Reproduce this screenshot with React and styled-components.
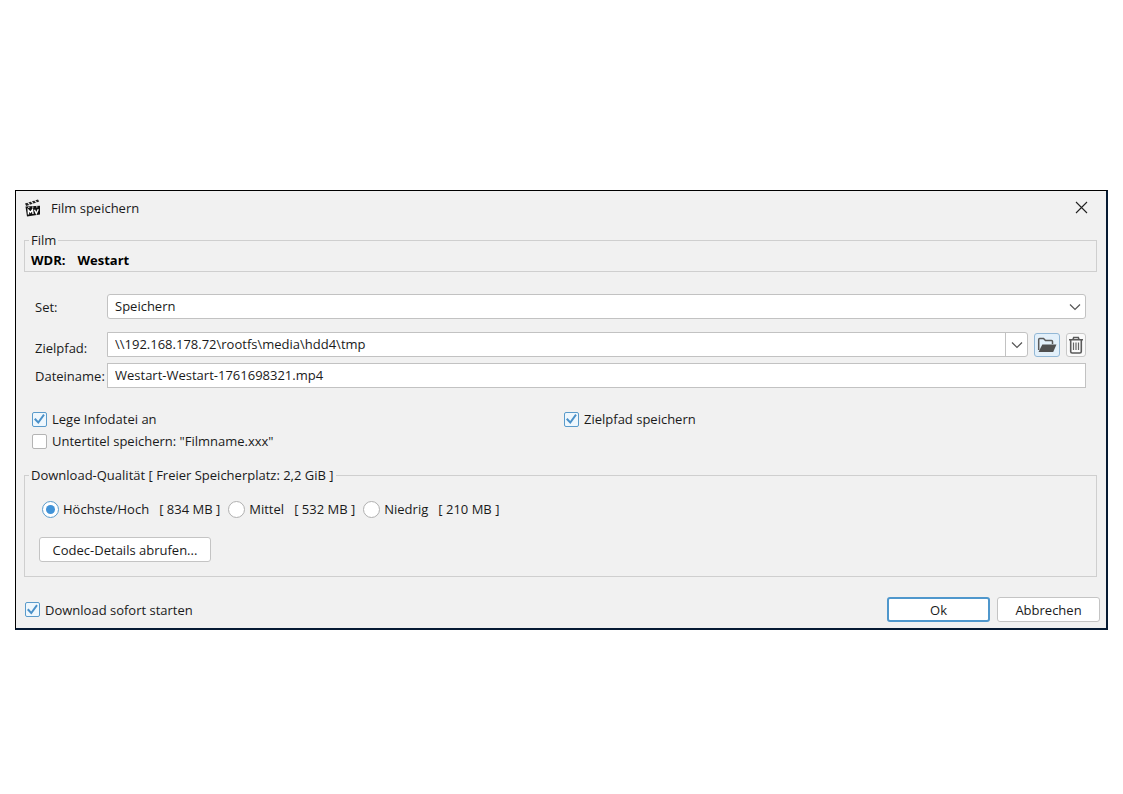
import React, { useState } from 'react'
import styled, { createGlobalStyle, css } from 'styled-components'

const GlobalStyle = createGlobalStyle`
    * {
        box-sizing: border-box;
    }
    body {
        margin: 0;
        background-color: #ffffff;
        color: #1a1a1a;
        font-family: "Open Sans", "Noto Sans", sans-serif;
        font-size: 13px;
        line-height: 18px;
    }
    button, input, select {
        font: inherit;
        color: inherit;
    }
`

const Page = styled.main`
    padding: 190px 15px 0;
`

const Dialog = styled.form`
    background-color: #f1f1f1;
    border: 1px solid #000000;
    border-right: 2px solid #061a33;
    border-bottom: 2px solid #061a33;
`

const TitleBar = styled.header`
    display: flex;
    align-items: center;
    height: 33px;
    margin-bottom: 7px;
    padding: 0 18px 0 9px;
`

const Title = styled.h1`
    flex: 1;
    margin: 0 0 0 10px;
    font-size: 13px;
    font-weight: 400;
`

const CloseButton = styled.button`
    display: flex;
    padding: 0;
    border: 0;
    background: none;
`

const Group = styled.fieldset`
    min-width: 0;
    margin: 0 9px 0 8px;
    padding: ${({ $roomy }) => ($roomy ? '16px 14px 14px' : '2px 6px 2px')};
    border: 1px solid #cfcfcf;

    legend {
        padding: 0 2px;
        margin-left: ${({ $roomy }) => ($roomy ? '-10px' : '-2px')};
    }
`

const FilmName = styled.p`
    display: flex;
    gap: 12px;
    margin: 0;
    color: #000000;
    font-weight: 700;
`

const Fields = styled.div`
    margin: 22px 20px 0 19px;
`

const FieldRow = styled.div`
    display: grid;
    grid-template-columns: 72px 1fr;
    align-items: center;
    margin-bottom: ${({ $gap = 0 }) => $gap}px;
`

const FieldLabel = styled.label`
    align-self: ${({ $low }) => ($low ? 'end' : 'center')};
`

const fieldBox = css`
    width: 100%;
    height: 25px;
    border: 1px solid #c2c2c2;
    background-color: #ffffff;
`

const SelectBox = styled.div`
    display: grid;
    align-items: center;

    > * {
        grid-area: 1 / 1;
    }
    svg {
        justify-self: end;
        margin-right: 5px;
        pointer-events: none;
    }
`

const Select = styled.select`
    ${fieldBox}
    appearance: none;
    padding: 0 24px 1px 7px;
    border-radius: 3px;
`

const TextInput = styled.input`
    ${fieldBox}
    padding: 0 7px 2px;
`

const PathRow = styled.div`
    display: flex;
    align-items: center;
    gap: 6px;
`

const ComboBox = styled.div`
    ${fieldBox}
    display: flex;
    flex: 1;
    border-radius: 0 3px 3px 0;

    input {
        flex: 1;
        min-width: 0;
        padding: 0 7px 2px;
        border: 0;
        background: none;
    }
    button {
        display: flex;
        align-items: center;
        justify-content: center;
        width: 22px;
        padding: 0;
        border: 0;
        border-left: 1px solid #c2c2c2;
        background: none;
    }
`

const IconButton = styled.button`
    display: flex;
    align-items: center;
    justify-content: center;
    width: ${({ $active }) => ($active ? '26px' : '20px')};
    height: 24px;
    padding: 0;
    border: 1px solid ${({ $active }) => ($active ? '#93b8d6' : '#c8c8c8')};
    border-radius: 3px;
    background-color: ${({ $active }) => ($active ? '#e3f0fa' : '#fafafa')};
`

const Options = styled.div`
    display: grid;
    grid-template-columns: 1fr 1fr;
    row-gap: 4px;
    margin: 22px 10px 16px 16px;
`

const Choice = styled.label`
    display: flex;
    align-items: center;
    gap: ${({ $gap = 5 }) => $gap}px;
    white-space: pre;
`

const Tick = styled.input`
    appearance: none;
    display: grid;
    place-items: center;
    width: 15px;
    height: 15px;
    margin: 0;
    border: 1px solid #b4b4b4;
    border-radius: 2px;
    background-color: #ffffff;

    &:checked {
        border-color: #5a9bcb;
        background-color: #eef7fd;
    }
    &:checked::before {
        content: '';
        width: 11px;
        height: 11px;
        background-color: #4a90c8;
        clip-path: polygon(0 55%, 14% 42%, 38% 68%, 84% 4%, 98% 16%, 40% 96%);
    }
`

const Radio = styled.input`
    appearance: none;
    display: grid;
    place-items: center;
    width: 17px;
    height: 17px;
    margin: 0;
    border: 1px solid #b0b0b0;
    border-radius: 50%;
    background-color: #ffffff;

    &:checked {
        border-color: #5a9bcb;
    }
    &:checked::before {
        content: '';
        width: 9px;
        height: 9px;
        border-radius: 50%;
        background-color: #4193d8;
    }
`

const Qualities = styled.div`
    display: flex;
    gap: 8px;
    margin: 0 3px 19px;
`

const Button = styled.button`
    display: block;
    width: ${({ $wide }) => ($wide ? '172px' : '103px')};
    height: 25px;
    padding: 0;
    border: ${({ $primary }) => ($primary ? '2px solid #4f97cc' : '1px solid #c4c4c4')};
    border-radius: 3px;
    background-color: #ffffff;
    text-align: center;
`

const Footer = styled.footer`
    display: flex;
    align-items: center;
    gap: 7px;
    padding: 20px 6px 6px 9px;

    label {
        margin-right: auto;
    }
`

const MvLogo = () => (
    <svg width="16" height="18" viewBox="0 0 16 18" aria-hidden="true">
        <path d="M0.500 7.500L15 6.800V15.500L2 17.500z" fill="#111" />
        <path d="M0 4.500L13 0.500l1.200 2L1.200 7z" fill="#222" />
        <path d="M2.500 3.200l2.200 2.500M6 2.200l2.200 2.500M9.500 1.200l2.200 2.500" stroke="#f1f1f1" strokeWidth="1.100" />
        <path d="M3 8.300l1.500 0M7 8.100h1.500M11 7.900h1.500" stroke="#f1f1f1" strokeWidth="1" />
        <path d="M3.500 15.500l-.300-4.500 2.300 2.500 2-2.800.500 4.300M9.500 10.700l1.800 3.800 2-4.300" fill="none" stroke="#fff" strokeWidth="1.400" />
    </svg>
)

const CloseIcon = () => (
    <svg width="13" height="13" viewBox="0 0 13 13" aria-hidden="true">
        <path d="M1 1l11 11M12 1L1 12" stroke="#222" strokeWidth="1.100" />
    </svg>
)

const Chevron = () => (
    <svg width="12" height="8" viewBox="0 0 12 8" aria-hidden="true">
        <path d="M1 1.500l5 5 5-5" fill="none" stroke="#555" strokeWidth="1.200" />
    </svg>
)

const FolderIcon = () => (
    <svg width="20" height="16" viewBox="0 0 20 16" aria-hidden="true">
        <path d="M1.700 13V2.500q0-1 1-1H6.500l2 2h6q1 0 1 1V7" fill="none" stroke="#5a5a5a" strokeWidth="1.500" />
        <path d="M5.300 7.500H19.500l-3.300 7.500H1.500z" fill="#505050" />
    </svg>
)

const TrashIcon = () => (
    <svg width="16" height="18" viewBox="0 0 16 18" aria-hidden="true">
        <path
            d="M1 3.700h14M5 3.500l.700-2h4.600l.700 2M2.700 4v11.500q0 1.500 1.500 1.500h7.600q1.500 0 1.500-1.500V4"
            fill="none"
            stroke="#5a5a5a"
            strokeWidth="1.600"
        />
        <path d="M5.500 6.500v7.500M8 6.500v7.500M10.500 6.500v7.500" stroke="#666" strokeWidth="1.200" />
    </svg>
)

const qualities = [
    { id: 'high', text: 'Höchste/Hoch   [ 834 MB ]' },
    { id: 'medium', text: 'Mittel   [ 532 MB ]' },
    { id: 'low', text: 'Niedrig   [ 210 MB ]' },
]

const CheckBox = ({ children, ...rest }) => (
    <Choice>
        <Tick type="checkbox" {...rest} />
        {children}
    </Choice>
)

const App = () => {
    const [quality, setQuality] = useState('high')

    return (
        <Page>
            <GlobalStyle />
            <Dialog onSubmit={(e) => e.preventDefault()}>
                <TitleBar>
                    <MvLogo />
                    <Title>Film speichern</Title>
                    <CloseButton type="button" aria-label="Schließen">
                        <CloseIcon />
                    </CloseButton>
                </TitleBar>

                <Group>
                    <legend>Film</legend>
                    <FilmName>
                        <span>WDR:</span>
                        <span>Westart</span>
                    </FilmName>
                </Group>

                <Fields>
                    <FieldRow $gap={13}>
                        <FieldLabel htmlFor="set">Set:</FieldLabel>
                        <SelectBox>
                            <Select id="set" defaultValue="save">
                                <option value="save">Speichern</option>
                            </Select>
                            <Chevron />
                        </SelectBox>
                    </FieldRow>

                    <FieldRow $gap={6}>
                        <FieldLabel htmlFor="path" $low>Zielpfad:</FieldLabel>
                        <PathRow>
                            <ComboBox>
                                <input id="path" type="text" defaultValue={'\\\\192.168.178.72\\rootfs\\media\\hdd4\\tmp'} />
                                <button type="button" aria-label="Pfade anzeigen">
                                    <Chevron />
                                </button>
                            </ComboBox>
                            <IconButton type="button" aria-label="Ordner wählen" $active>
                                <FolderIcon />
                            </IconButton>
                            <IconButton type="button" aria-label="Pfad löschen">
                                <TrashIcon />
                            </IconButton>
                        </PathRow>
                    </FieldRow>

                    <FieldRow>
                        <FieldLabel htmlFor="name">Dateiname:</FieldLabel>
                        <TextInput id="name" type="text" defaultValue="Westart-Westart-1761698321.mp4" />
                    </FieldRow>
                </Fields>

                <Options>
                    <CheckBox defaultChecked>Lege Infodatei an</CheckBox>
                    <CheckBox defaultChecked>Zielpfad speichern</CheckBox>
                    <CheckBox>Untertitel speichern: "Filmname.xxx"</CheckBox>
                </Options>

                <Group $roomy>
                    <legend>Download-Qualität [ Freier Speicherplatz: 2,2 GiB ]</legend>
                    <Qualities>
                        {qualities.map(({ id, text }) => (
                            <Choice key={id} $gap={4}>
                                <Radio
                                    type="radio"
                                    name="quality"
                                    checked={quality === id}
                                    onChange={() => setQuality(id)}
                                />
                                {text}
                            </Choice>
                        ))}
                    </Qualities>
                    <Button type="button" $wide>Codec-Details abrufen...</Button>
                </Group>

                <Footer>
                    <CheckBox defaultChecked>Download sofort starten</CheckBox>
                    <Button type="submit" $primary>Ok</Button>
                    <Button type="button">Abbrechen</Button>
                </Footer>
            </Dialog>
        </Page>
    )
}

export default App
